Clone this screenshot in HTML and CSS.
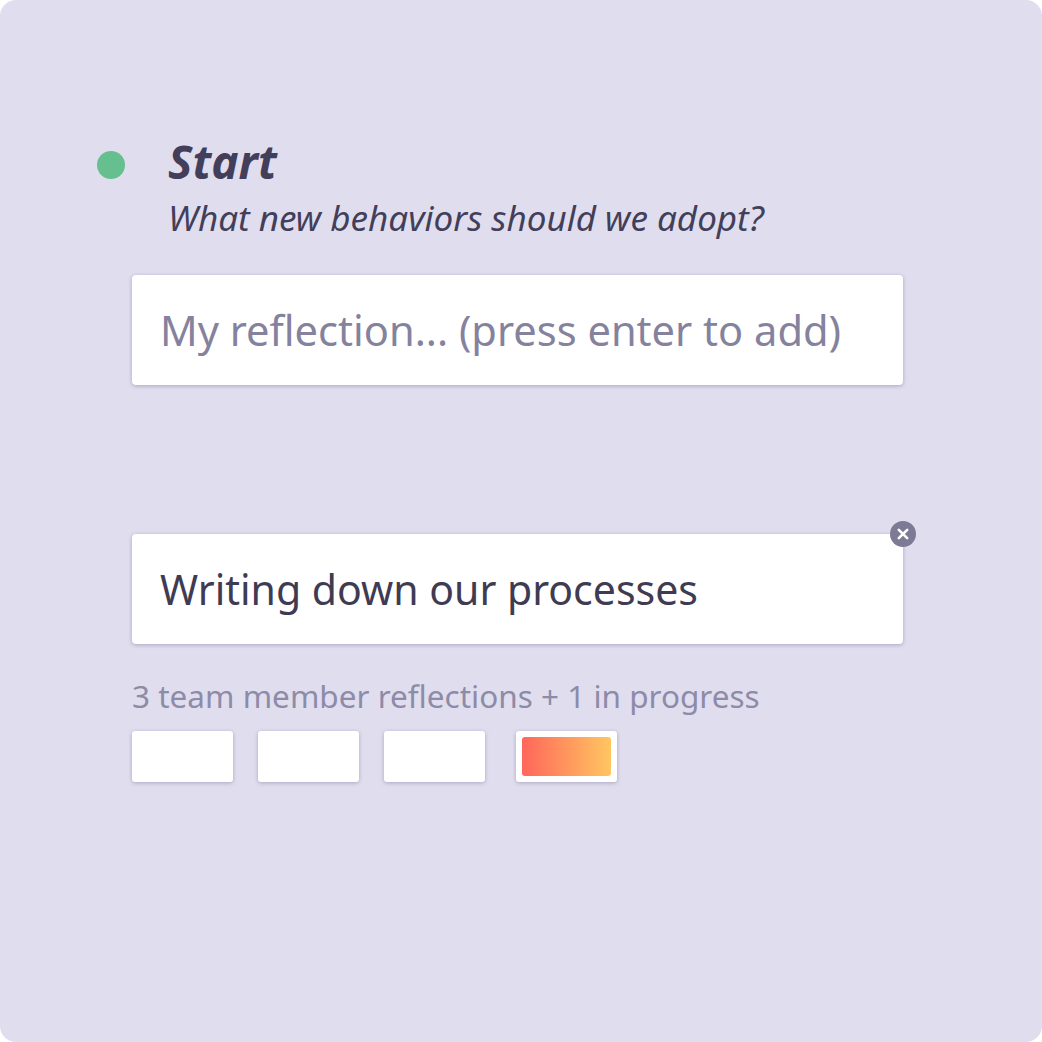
FILE: index.html
```html
<!DOCTYPE html>
<html lang="en">
<head>
    <meta charset="UTF-8">
    <meta name="viewport" content="width=device-width, initial-scale=1.0">
    <title>Retro prompt</title>
    <link rel="stylesheet" href="styles.css">
</head>
<body>
    <div class="frame">
        <div class="prompt-header">
            <span class="prompt-dot"></span>
            <div class="prompt-text">
                <h1>Start</h1>
                <p>What new behaviors should we adopt?</p>
            </div>
        </div>
        <div class="reflection-input">My reflection... (press enter to add)</div>
        <div class="reflection-card">
            Writing down our processes
            <span class="remove-btn">
                <svg viewBox="0 0 26 26" width="26" height="26">
                    <circle cx="13" cy="13" r="13" fill="#7d7a95"/>
                    <path d="M8.8 8.8 L17.2 17.2 M17.2 8.8 L8.8 17.2" stroke="#fff" stroke-width="2.6" stroke-linecap="round"/>
                </svg>
            </span>
        </div>
        <div class="team-status">3 team member reflections + 1 in progress</div>
        <div class="mini-cards">
            <div class="mini-card"></div>
            <div class="mini-card"></div>
            <div class="mini-card"></div>
            <div class="mini-card in-progress"><div class="progress-fill"></div></div>
        </div>
    </div>
</body>
</html>
```

FILE: styles.css
```css
body {
    margin: 0;
    background: #ffffff;
    font-family: "Noto Sans", "Open Sans", sans-serif;
}
:root {
    --card-shadow: 0px 1px 4px 0px rgba(68, 62, 110, 0.35);
    --ink: #433f5a;
    --muted: #85829e;
}
.frame {
    width: 1042px;
    height: 1042px;
    box-sizing: border-box;
    background: #e0deee;
    border-radius: 16px;
    padding: 132px 139px 0 132px;
    display: flex;
    flex-direction: column;
}
.prompt-header {
    display: flex;
    align-items: flex-start;
    margin-left: -35px;
}
.prompt-dot {
    width: 28px;
    height: 28px;
    border-radius: 50%;
    background: #66bf8e;
    margin-top: 19px;
    margin-right: 43px;
    flex-shrink: 0;
}
.prompt-text h1 {
    margin: 0;
    font-size: 46px;
    line-height: 58px;
    font-style: italic;
    font-weight: 700;
    color: var(--ink);
}
.prompt-text p {
    margin: 6px 0 0;
    font-size: 35px;
    line-height: 44px;
    font-style: italic;
    color: var(--ink);
}
.reflection-input,
.reflection-card {
    height: 110px;
    box-sizing: border-box;
    background: #ffffff;
    border-radius: 4px;
    box-shadow: var(--card-shadow);
    display: flex;
    align-items: center;
    padding: 0 28px;
    font-size: 41px;
}
.reflection-input {
    margin-top: 35px;
    font-size: 41.6px;
    color: var(--muted);
}
.reflection-card {
    position: relative;
    margin-top: 149px;
    color: #3e3b53;
}
.remove-btn {
    position: absolute;
    top: -13px;
    right: -13px;
    width: 26px;
    height: 26px;
}
.remove-btn svg {
    display: block;
}
.team-status {
    margin-top: 34px;
    font-size: 31.5px;
    line-height: 36px;
    color: #8e8ba8;
}
.mini-cards {
    display: flex;
    gap: 25px;
    margin-top: 17px;
}
.mini-card {
    width: 101px;
    height: 51px;
    box-sizing: border-box;
    background: #ffffff;
    border-radius: 3px;
    box-shadow: var(--card-shadow);
}
.mini-card.in-progress {
    margin-left: 6px;
    padding: 6px;
}
.progress-fill {
    height: 100%;
    border-radius: 3px;
    background: linear-gradient(90deg, #ff665a, #ffc661);
}
```
